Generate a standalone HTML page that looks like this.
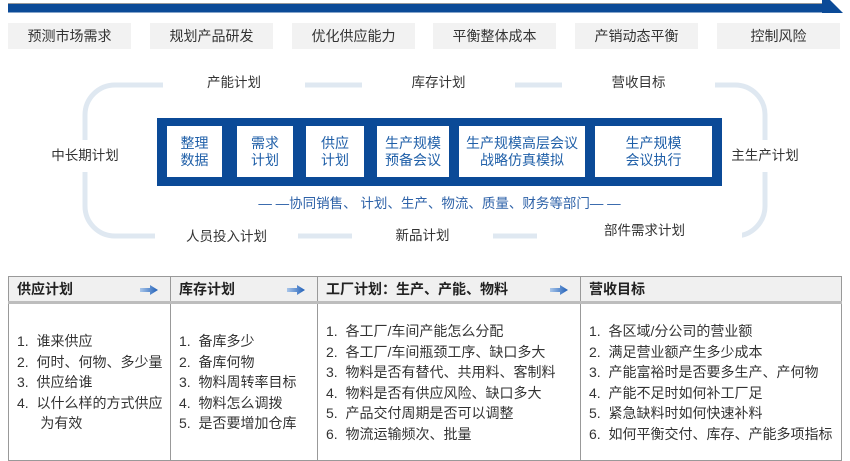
<!DOCTYPE html>
<html><head><meta charset="utf-8"><style>
*{margin:0;padding:0;box-sizing:border-box}
body{width:850px;height:460px;background:#fff;position:relative;overflow:hidden;font-family:"Liberation Sans","Noto Sans CJK SC",sans-serif;color:#333}
.a{position:absolute}
.btn{position:absolute;top:23px;height:26px;width:123px;background:#f2f2f2;font-size:14px;line-height:26px;text-align:center;color:#333}
.lbl{position:absolute;background:#fff;font-size:13.5px;color:#333;text-align:center;line-height:18px}
.ib{position:absolute;top:126px;height:51px;background:#fff;color:#1f5fa8;font-size:14px;line-height:17px;display:flex;align-items:center;justify-content:center;text-align:center}
table{position:absolute;left:8px;top:276px;width:834px;border-collapse:collapse;font-size:14px}
td{border:1px solid #999;vertical-align:top}
th{border:1px solid #999;border-bottom:3px solid #bdbdbd;background:#f0f0f0;height:26px;text-align:left;padding-left:8px;font-weight:bold;font-size:14px;position:relative;color:#222}
.ar{position:absolute;right:12px;top:8px;width:18px;height:10px}
td div{line-height:20.5px;padding-left:8px;color:#333}
</style></head><body>
<svg class="a" style="left:0;top:0" width="850" height="16"><line x1="8" y1="3.5" x2="826" y2="3.5" stroke="#999" stroke-width="1"/><rect x="8" y="4" width="820" height="8.5" fill="#0b4a97"/><polygon points="822,0 830,0 843,13 822,13" fill="#0b4a97"/><rect x="8" y="0" width="814" height="3" fill="#fff"/></svg>
<div class="btn" style="left:8px">预测市场需求</div>
<div class="btn" style="left:150px">规划产品研发</div>
<div class="btn" style="left:292px">优化供应能力</div>
<div class="btn" style="left:433px">平衡整体成本</div>
<div class="btn" style="left:575px">产销动态平衡</div>
<div class="btn" style="left:717px">控制风险</div>
<svg class="a" style="left:0;top:0" width="850" height="260"><rect x="85" y="85" width="680" height="151" rx="30" fill="none" stroke="#dfe8f1" stroke-width="5"/></svg>
<div class="lbl" style="left:163px;top:74px;width:142px;height:22px">产能计划</div>
<div class="lbl" style="left:362px;top:74px;width:153px;height:22px">库存计划</div>
<div class="lbl" style="left:562px;top:74px;width:153px;height:22px">营收目标</div>
<div class="lbl" style="left:40px;top:140px;width:90px;height:32px;line-height:32px">中长期计划</div>
<div class="lbl" style="left:720px;top:140px;width:90px;height:32px;line-height:32px">主生产计划</div>
<div class="lbl" style="left:155px;top:226px;width:143px;height:22px;line-height:22px">人员投入计划</div>
<div class="lbl" style="left:352px;top:225px;width:141px;height:22px;line-height:22px">新品计划</div>
<div class="lbl" style="left:537px;top:220px;width:205px;height:22px;line-height:22px;padding-left:10px">部件需求计划</div>
<div class="a" style="left:157px;top:118px;width:565px;height:68px;background:#0b4a97"></div>
<div class="ib" style="left:167px;width:55px">整理<br>数据</div>
<div class="ib" style="left:237px;width:56px">需求<br>计划</div>
<div class="ib" style="left:306px;width:58px">供应<br>计划</div>
<div class="ib" style="left:377px;width:72px">生产规模<br>预备会议</div>
<div class="ib" style="left:459px;width:126px">生产规模高层会议<br>战略仿真模拟</div>
<div class="ib" style="left:595px;width:117px">生产规模<br>会议执行</div>
<div class="a" style="left:157px;top:192px;width:565px;text-align:center;font-size:13.5px;color:#2e62a8">— —协同销售、 计划、生产、物流、质量、财务等部门— —</div>
<svg width="0" height="0" style="position:absolute"><defs><linearGradient id="g" x1="0" x2="1"><stop offset="0" stop-color="#a9c6ea"/><stop offset="1" stop-color="#1f5fb8"/></linearGradient></defs></svg>
<table>
<tr><th style="width:162px">供应计划<svg class="ar"><polygon points="0,3 10,3 10,0 18,5 10,10 10,7 0,7" fill="url(#g)"/></svg></th><th style="width:147px">库存计划<svg class="ar"><polygon points="0,3 10,3 10,0 18,5 10,10 10,7 0,7" fill="url(#g)"/></svg></th><th style="width:263px">工厂计划：生产、产能、物料<svg class="ar"><polygon points="0,3 10,3 10,0 18,5 10,10 10,7 0,7" fill="url(#g)"/></svg></th><th>营收目标</th></tr>
<tr style="height:158px"><td><div style="padding-top:27px">1.&nbsp; 谁来供应<br>2.&nbsp; 何时、何物、多少量<br>3.&nbsp; 供应给谁<br>4.&nbsp; 以什么样的方式供应<br>&nbsp;&nbsp;&nbsp;&nbsp;&nbsp; 为有效</div></td>
<td><div style="padding-top:27px">1.&nbsp; 备库多少<br>2.&nbsp; 备库何物<br>3.&nbsp; 物料周转率目标<br>4.&nbsp; 物料怎么调拨<br>5.&nbsp; 是否要增加仓库</div></td>
<td><div style="padding-top:17px">1.&nbsp; 各工厂/车间产能怎么分配<br>2.&nbsp; 各工厂/车间瓶颈工序、缺口多大<br>3.&nbsp; 物料是否有替代、共用料、客制料<br>4.&nbsp; 物料是否有供应风险、缺口多大<br>5.&nbsp; 产品交付周期是否可以调整<br>6.&nbsp; 物流运输频次、批量</div></td>
<td><div style="padding-top:17px">1.&nbsp; 各区域/分公司的营业额<br>2.&nbsp; 满足营业额产生多少成本<br>3.&nbsp; 产能富裕时是否要多生产、产何物<br>4.&nbsp; 产能不足时如何补工厂足<br>5.&nbsp; 紧急缺料时如何快速补料<br>6.&nbsp; 如何平衡交付、库存、产能多项指标</div></td></tr>
</table>
</body></html>
